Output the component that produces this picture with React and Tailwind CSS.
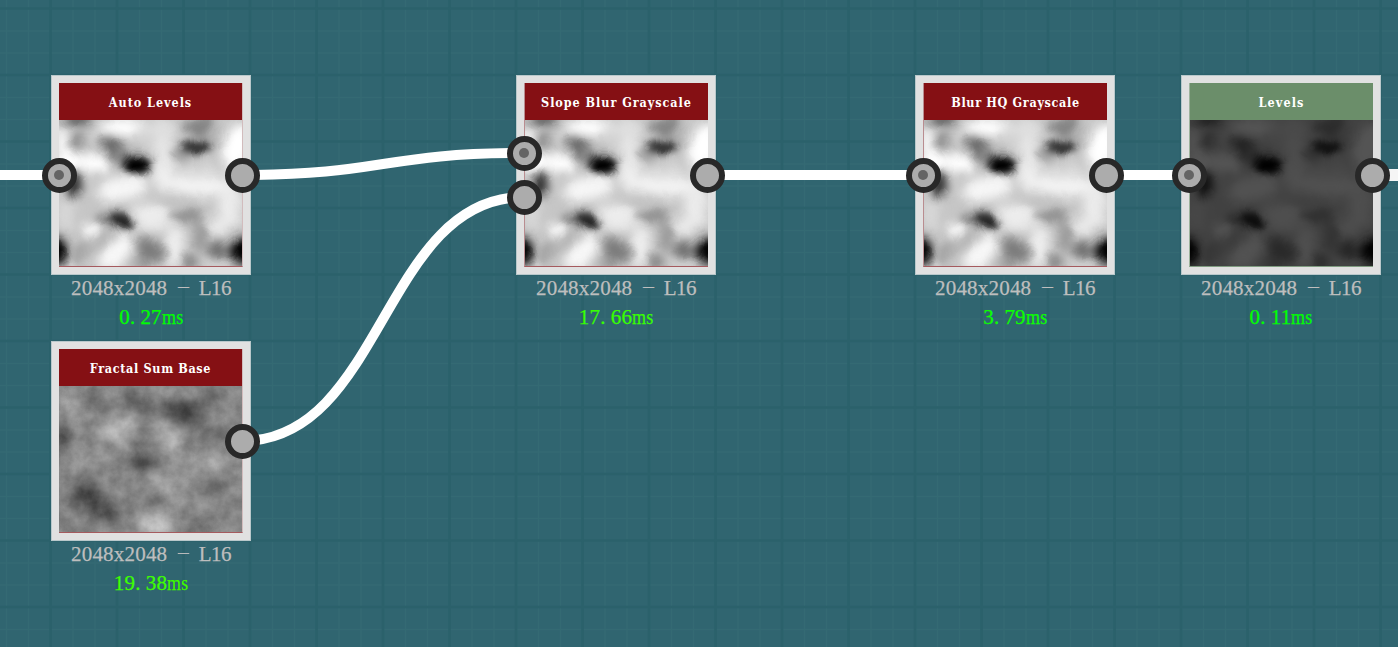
import React from 'react';

const LIGHT = [
  [365, 200, 64, 28, 0, '#ffffff'], [188, 240, 20, 38, 0, '#ffffff'], [285, 312, 42, 34, 0, '#ffffff'],
  [205, 303, 44, 36, 0, '#ffffff'], [365, 386, 80, 36, -8, '#f6f6f6'], [492, 290, 34, 115, 0, '#e6e6e6'],
  [490, 350, 28, 32, 0, '#f0f0f0'], [712, 260, 44, 75, 12, '#ffffff'], [600, 375, 100, 36, 0, '#f2f2f2'],
  [690, 440, 36, 70, 0, '#ebebeb'], [455, 468, 60, 46, 0, '#ececec'], [277, 515, 26, 28, 0, '#ffffff'],
  [348, 580, 70, 34, -45, '#f8f8f8'], [525, 560, 26, 72, 0, '#f0f0f0'], [650, 500, 50, 30, 0, '#e8e8e8'],
  [480, 205, 50, 30, 0, '#dedede'], [200, 460, 24, 60, 0, '#d8d8d8'], [205, 606, 20, 20, 0, '#ebebeb'],
  [300, 225, 14, 25, 0, '#dddddd'], [650, 612, 40, 10, 0, '#dcdcdc'], [590, 330, 60, 20, 0, '#d6d6d6'],
  [440, 240, 30, 20, 0, '#d2d2d2'],
];

const DARK = [
  [232, 178, 48, 14, 0, '#484848'], [235, 243, 22, 30, 0, '#909090'], [605, 200, 52, 32, 0, '#848484'],
  [545, 280, 30, 24, 0, '#9c9c9c'], [638, 230, 16, 45, 10, '#b0b0b0'], [335, 256, 38, 20, 28, '#606060'],
  [388, 300, 66, 24, 12, '#858585'], [222, 375, 24, 38, 0, '#303030'], [335, 474, 44, 12, 0, '#484848'],
  [568, 470, 50, 17, 0, '#888888'], [168, 575, 34, 42, 0, '#000000'], [735, 573, 42, 42, 0, '#000000'],
  [655, 570, 34, 22, 0, '#686868'], [450, 570, 46, 32, 25, '#7c7c7c'], [600, 530, 22, 44, 0, '#989898'],
  [570, 605, 24, 22, 0, '#808080'], [500, 422, 80, 8, 0, '#bcbcbc'], [300, 540, 46, 12, -40, '#a8a8a8'],
  [240, 580, 18, 40, 20, '#a0a0a0'], [430, 612, 36, 14, 0, '#989898'], [285, 365, 16, 35, 10, '#c8c8c8'],
];

const CORES = [
  [590, 260, 46, 20, 0, '#303030'], [412, 314, 40, 27, 0, '#000000'], [366, 486, 38, 22, 28, '#242424'],
];

const FRACTAL = [
  [205, 220, 40, 45, 0, '#a4a4a4'], [285, 205, 35, 30, 0, '#606060'], [420, 215, 65, 22, 28, '#484848'],
  [545, 245, 60, 30, 8, '#242424'], [630, 200, 45, 22, -30, '#505050'], [355, 300, 50, 32, 10, '#d4d4d4'],
  [510, 320, 24, 58, -35, '#cccccc'], [185, 330, 28, 40, 0, '#3c3c3c'], [630, 305, 70, 40, 0, '#6c6c6c'],
  [428, 398, 28, 32, 0, '#202020'], [620, 400, 70, 32, 0, '#a8a8a8'], [270, 380, 75, 24, 0, '#9c9c9c'],
  [262, 500, 52, 38, 30, '#242424'], [318, 545, 46, 32, 25, '#303030'], [500, 465, 65, 28, 25, '#b0b0b0'],
  [460, 518, 45, 20, 0, '#606060'], [470, 582, 58, 34, 0, '#dadada'], [590, 604, 44, 18, 0, '#444444'],
  [650, 465, 50, 25, 0, '#606060'], [340, 435, 30, 25, 0, '#707070'], [205, 590, 30, 20, 0, '#6c6c6c'],
  [690, 240, 28, 30, 0, '#8c8c8c'], [440, 178, 40, 15, 0, '#a4a4a4'], [420, 335, 20, 40, 0, '#646464'],
];

function Blobs({ items }) {
  return items.map(([x, y, rx, ry, angle, fill], i) => (
    <ellipse key={i} cx={x} cy={y} rx={rx} ry={ry} fill={fill} transform={`rotate(${angle} ${x} ${y})`} />
  ));
}

function Blur({ id, amount }) {
  return (
    <filter id={id} filterUnits="userSpaceOnUse" x="60" y="60" width="790" height="680" colorInterpolationFilters="sRGB">
      <feGaussianBlur stdDeviation={amount} />
    </filter>
  );
}

function CellTexture({ id, dim }) {
  return (
    <svg viewBox="177 179 550 440" preserveAspectRatio="none" className={dim ? 'block h-full w-full brightness-[.33]' : 'block h-full w-full'}>
      <defs>
        <Blur id={`${id}-a`} amount="16" />
        <Blur id={`${id}-b`} amount="14" />
        <Blur id={`${id}-c`} amount="11" />
        <filter id={`${id}-w`} filterUnits="userSpaceOnUse" x="60" y="60" width="790" height="680" colorInterpolationFilters="sRGB">
          <feTurbulence type="fractalNoise" baseFrequency="0.018" numOctaves="2" seed="5" result="n" />
          <feDisplacementMap in="SourceGraphic" in2="n" scale="20" xChannelSelector="R" yChannelSelector="G" />
        </filter>
      </defs>
      <g filter={`url(#${id}-w)`}>
        <rect x="60" y="60" width="790" height="680" fill="#c6c6c6" />
        <g filter={`url(#${id}-a)`}><Blobs items={LIGHT} /></g>
        <g filter={`url(#${id}-b)`}><Blobs items={DARK} /></g>
        <g filter={`url(#${id}-c)`}><Blobs items={CORES} /></g>
      </g>
    </svg>
  );
}

function FractalTexture() {
  return (
    <svg viewBox="177 167 550 440" preserveAspectRatio="none" className="block h-full w-full">
      <defs>
        <Blur id="fr-blur" amount="19" />
        <filter id="fr-noise" filterUnits="userSpaceOnUse" x="177" y="167" width="550" height="440" colorInterpolationFilters="sRGB">
          <feTurbulence type="fractalNoise" baseFrequency="0.024" numOctaves="5" seed="8" />
          <feColorMatrix values="0.8 0 0 0 0.14  0.8 0 0 0 0.14  0.8 0 0 0 0.14  0 0 0 0 1" />
        </filter>
      </defs>
      <rect x="177" y="167" width="550" height="440" fill="#888888" />
      <g filter="url(#fr-blur)"><Blobs items={FRACTAL} /></g>
      <rect x="177" y="167" width="550" height="440" filter="url(#fr-noise)" opacity="0.26" />
    </svg>
  );
}

function Socket({ place, dot }) {
  return (
    <span className={`absolute flex size-[34.5px] items-center justify-center rounded-full border-6 border-[#282828] bg-[#acacac] ${place}`}>
      {dot && <span className="size-[10px] rounded-full bg-[#646464]" />}
    </span>
  );
}

function Node({ place, title, titleClass, time, timeClass, frameClass, headerClass, inputs, children }) {
  const [whole, fraction] = time.split('.');
  return (
    <div className={`absolute w-[200px] ${place}`}>
      <div className="relative h-[200px] border border-[#b9c8cb] bg-[#e1e1e1] p-[7px]">
        <div className={`flex h-[184px] flex-col border-b ${frameClass}`}>
          <div className={`flex h-[37px] shrink-0 items-center justify-center whitespace-pre pt-[3px] font-['DejaVu_Serif','Liberation_Serif',serif] text-[12.5px] font-bold leading-none text-white [font-stretch:condensed] ${headerClass} ${titleClass}`}>
            {title}
          </div>
          <div className="h-[146px]">{children}</div>
        </div>
        {inputs === 1 && <Socket place="-left-[10px] top-[82px]" dot />}
        {inputs === 2 && <Socket place="-left-[10px] top-[60px]" dot />}
        {inputs === 2 && <Socket place="-left-[10px] top-[104px]" />}
        <Socket place="left-[173px] top-[82px]" />
      </div>
      <div className="flex flex-col items-center whitespace-pre font-['Liberation_Serif',serif] text-[21px] leading-[29px] [-webkit-text-stroke:.25px_currentColor]">
        <div className="-mt-px flex w-[160px] justify-between text-[#bebebe]">
          <span className="tracking-[.2px]">2048x2048</span>
          <span className="w-[15px] translate-x-px -translate-y-px scale-x-200 text-center scale-y-60">-</span>
          <span className="tracking-[-.5px]">L16</span>
        </div>
        <div className={`flex tracking-[.2px] ${timeClass}`}>
          <span>{whole}.</span>
          <span className="pl-[5px]">{fraction}</span>
          <span className="w-[21px] origin-left scale-x-[.86]">ms</span>
        </div>
      </div>
    </div>
  );
}

function lines(start, end, step) {
  const out = [];
  for (let v = start; v < end; v += step) out.push(v);
  return out;
}

function Grid() {
  const minorX = lines(6.5, 1398, 66.5).flatMap((v) => [v, v + 22]);
  const minorY = lines(-35.5, 647, 66.5).flatMap((v) => [v, v + 22]);
  return (
    <g>
      <path d={minorX.map((x) => `M${x} 0V647`).join('') + minorY.map((y) => `M0 ${y}H1398`).join('')} stroke="#346a73" strokeWidth="1.5" />
      <path d={lines(50.5, 1398, 66.5).map((x) => `M${x} 0V647`).join('') + lines(8.5, 647, 66.5).map((y) => `M0 ${y}H1398`).join('')} stroke="#2b616b" strokeWidth="2.6" />
    </g>
  );
}

const RED_RIGHT = 'border-r border-b-[#a55a5e] border-r-[#d2bcbd]';
const RED_LEFT = 'border-l border-b-[#a55a5e] border-l-[#b98d90]';
const GREEN_LEFT = 'border-l border-b-[#7f9c80] border-l-[#9db39c]';

export default function App() {
  return (
    <main className="relative h-[647px] w-[1398px] overflow-hidden bg-[#306570]">
      <svg width="1398" height="647" className="block" fill="none">
        <Grid />
        <g stroke="#ffffff" strokeWidth="10">
          <path d="M0 175H59M242 175C383 175 383 153 524 153M242 441C383 441 383 197 524 197M707 175H923M1106 175H1189" />
          <path d="M1372 175H1398" stroke="#f5f5f5" strokeWidth="12" />
        </g>
      </svg>
      <Node place="left-[51px] top-[75px]" title="Auto Levels" titleClass="tracking-[.95px]" time="0.27" timeClass="text-[#00ff00]" frameClass={RED_RIGHT} headerClass="bg-[#851014]" inputs={1}>
        <CellTexture id="auto" />
      </Node>
      <Node place="left-[516px] top-[75px]" title="Slope Blur Grayscale" titleClass="tracking-[.95px]" time="17.66" timeClass="text-[#38ff00]" frameClass={RED_LEFT} headerClass="bg-[#851014]" inputs={2}>
        <CellTexture id="slope" />
      </Node>
      <Node place="left-[915px] top-[75px]" title="Blur HQ Grayscale" titleClass="tracking-[.65px]" time="3.79" timeClass="text-[#0cff00]" frameClass={RED_LEFT} headerClass="bg-[#851014]" inputs={1}>
        <CellTexture id="blur" />
      </Node>
      <Node place="left-[1181px] top-[75px]" title="Levels" titleClass="tracking-[1.1px]" time="0.11" timeClass="text-[#00ff00]" frameClass={GREEN_LEFT} headerClass="bg-[#6b8e6a]" inputs={1}>
        <CellTexture id="levels" dim />
      </Node>
      <Node place="left-[51px] top-[341px]" title="Fractal Sum Base" titleClass="tracking-[.65px]" time="19.38" timeClass="text-[#3eff00]" frameClass={RED_RIGHT} headerClass="bg-[#851014]" inputs={0}>
        <FractalTexture />
      </Node>
    </main>
  );
}
